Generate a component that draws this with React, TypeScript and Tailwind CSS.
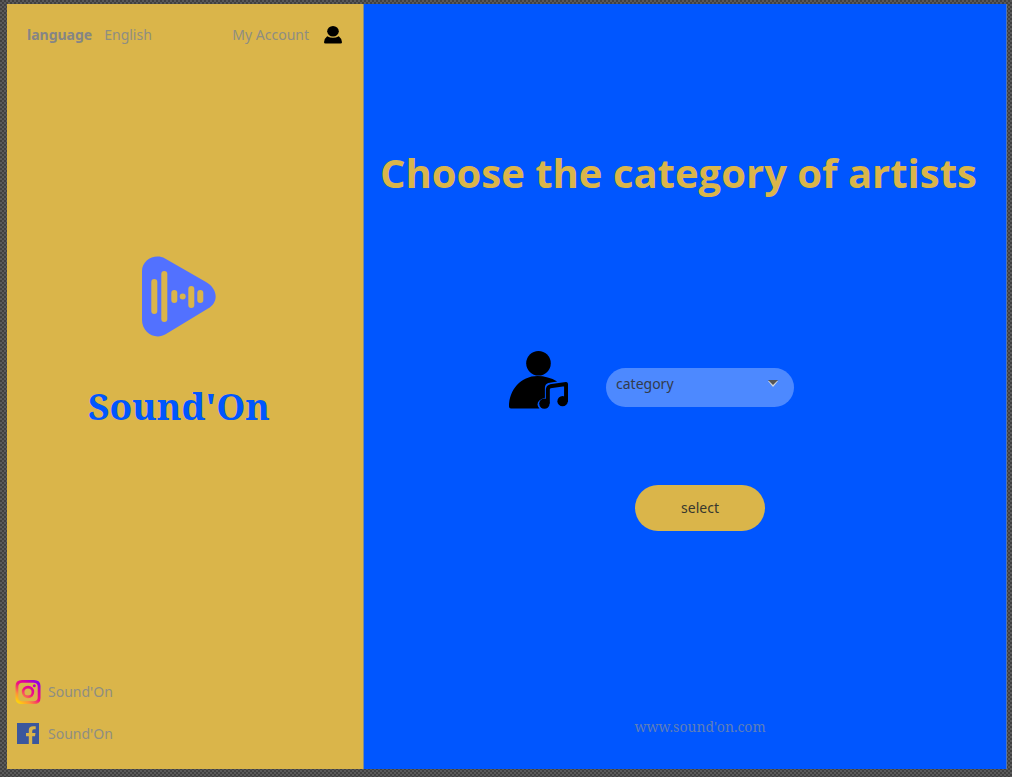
import React from "react";

const backdrop =
  "bg-[#484848] bg-[repeating-conic-gradient(#5a5a5a_0%_25%,#404040_0%_50%)] bg-[length:4px_4px]";

function AccountIcon() {
  return (
    <svg viewBox="0 0 18 18" className="h-[18px] w-[18px]" aria-hidden="true">
      <ellipse cx="9" cy="5.2" rx="5.8" ry="5.2" />
      <path d="M3.2 10.2Q9 13.2 14.8 10.2Q17.6 12.2 18 16.2Q18 17.5 16.5 17.5H1.5Q0 17.5 0 16.2Q.4 12.2 3.2 10.2Z" />
    </svg>
  );
}

function SoundLogo() {
  return (
    <svg viewBox="0 0 74 82" className="h-[82px] w-[74px]" aria-hidden="true">
      <path
        d="M0 15C0 4 13-3 23 2.5L64 26C76 33 77 46 66 52.500L24 78C13 85 0 76 0 64Z"
        fill="#5271ff"
      />
      <g stroke="#dab54a" strokeLinecap="round" strokeWidth="6">
        <path d="M12.300 26V55M22.300 18V63M32.300 37V44M49.300 33V49M58.300 37V44" />
      </g>
      <circle cx="40.700" cy="40.500" r="3" fill="#dab54a" />
    </svg>
  );
}

function InstagramIcon() {
  return (
    <svg viewBox="0 0 26 26" className="h-[26px] w-[26px]" aria-hidden="true">
      <defs>
        <linearGradient id="insta" x1="0.1" y1="1" x2="0.900" y2="0">
          <stop offset="0" stopColor="#ffe000" />
          <stop offset="0.250" stopColor="#ff9138" />
          <stop offset="0.500" stopColor="#f2127f" />
          <stop offset="0.750" stopColor="#d300a8" />
          <stop offset="1" stopColor="#7600ff" />
        </linearGradient>
      </defs>
      <path
        fillRule="evenodd"
        fill="url(#insta)"
        d="M7 1H19Q25.500 1 25.500 7V19Q25.500 25 19 25H7Q.5 25 .5 19V7Q.5 1 7 1ZM7.500 3.700Q3.300 3.700 3.300 7.500V18.500Q3.300 22.300 7.500 22.300H18.500Q22.700 22.300 22.700 18.500V7.500Q22.700 3.700 18.500 3.700ZM13 6.800A6.200 6.200 0 1 1 13 19.200A6.200 6.200 0 1 1 13 6.800ZM13 9.400A3.600 3.600 0 1 0 13 16.600A3.600 3.600 0 1 0 13 9.400ZM19.300 5.200A1.500 1.500 0 1 1 19.300 8.200A1.500 1.500 0 1 1 19.300 5.200Z"
      />
    </svg>
  );
}

function FacebookIcon() {
  return (
    <svg viewBox="0 0 22 21" className="mx-[2px] h-[21px] w-[22px]" aria-hidden="true">
      <path
        fill="#3b579d"
        d="M0 0H22V21H15.200V13.200H18L18.500 9.900H15.200V8Q15.200 6.200 17 6.200H18.700V3.200H16Q11.800 3.200 11.800 7.300V9.900H9V13.200H11.800V21H0Z"
      />
    </svg>
  );
}

function ArtistIcon() {
  return (
    <svg viewBox="0 0 60 60" className="h-[60px] w-[59px]" aria-hidden="true">
      <circle cx="30" cy="13" r="12.500" />
      <path d="M0 57C0 40 12 26 29 26C36 26 43 28 49 31.500L40 33Q36.500 34 36.500 38V48Q29 50 29 55Q29 57 31 59H2Q0 59 0 57Z" />
      <path d="M39.500 54V40Q39.500 37 42 36.400L58 34V52" fill="none" stroke="#000" strokeWidth="4" strokeLinejoin="round" />
      <circle cx="36" cy="54" r="5.300" />
      <circle cx="54.500" cy="51.500" r="5.300" />
    </svg>
  );
}

export default function App() {
  return (
    <div
      className={`${backdrop} flex min-h-screen pt-1 pr-[5px] pb-2 pl-[7px] font-['Noto_Sans','Open_Sans',sans-serif] text-sm`}
    >
      <aside className="flex w-[357px] shrink-0 flex-col border-r border-[#7d8b91] bg-[#dab54a] text-[#8e8e82]">
        <header className="flex items-center justify-between pt-[21px] pr-[21px] pl-5">
          <div className="flex gap-3">
            <span className="font-bold text-[#858585]">language</span>
            <button type="button">English</button>
          </div>
          <a href="#account" className="flex items-center gap-[15px]">
            My Account
            <AccountIcon />
          </a>
        </header>

        <div className="mt-[211px] flex flex-col items-center gap-10 pr-3">
          <SoundLogo />
          <p className="font-['Noto_Serif','Droid_Serif','DejaVu_Serif_Condensed','DejaVu_Serif',serif] text-[37px] leading-[56px] font-bold text-[#0056ff]">
            Sound'On
          </p>
        </div>

        <nav aria-label="Social media" className="mt-auto flex flex-col items-start gap-[18px] pb-[25px] pl-2">
          <a href="#instagram" className="flex items-center gap-[7px] leading-5">
            <InstagramIcon />
            Sound'On
          </a>
          <a href="#facebook" className="flex items-center gap-[7px] leading-5">
            <FacebookIcon />
            Sound'On
          </a>
        </nav>
      </aside>

      <main className="flex min-w-0 flex-1 flex-col border-r border-[#5475b5] bg-[#0056ff]">
        <h1 className="mt-[141px] px-4 font-['Open_Sans',sans-serif] text-[40px] leading-[56px] font-bold text-[#dab54a]">
          Choose the category of artists
        </h1>

        <form
          className="mt-[149px] grid flex-1 grid-cols-[59px_188px] grid-rows-[auto_auto_1fr] items-center justify-center gap-x-[38px] pr-[67px] pb-8"
          onSubmit={(e) => e.preventDefault()}
        >
          <ArtistIcon />
          <div className="relative mt-[14px]">
            <select
              aria-label="Artist category"
              className="block h-[39px] w-full appearance-none rounded-full bg-[#4d89ff] pr-8 pb-[6px] pl-[10px] text-[#333b4b]"
            >
              <option>category</option>
            </select>
            <svg
              viewBox="0 0 10 7"
              className="pointer-events-none absolute top-3 right-4 h-[7px] w-[10px]"
              aria-hidden="true"
            >
              <path d="M0 1H10L5 7Z" fill="#d4d8df" />
              <path d="M0 0H10L5 5Z" fill="#555" />
            </svg>
          </div>
          <button
            type="submit"
            className="col-start-2 mt-[75px] h-[46px] w-[130px] justify-self-center rounded-full bg-[#dab54a] text-[#38382f]"
          >
            select
          </button>
          <a
            href="#home"
            className="col-start-2 self-end justify-self-center font-['Noto_Serif','Droid_Serif','DejaVu_Serif_Condensed','DejaVu_Serif',serif] text-sm text-[#5f7fb8]"
          >
            www.sound'on.com
          </a>
        </form>
      </main>
    </div>
  );
}
